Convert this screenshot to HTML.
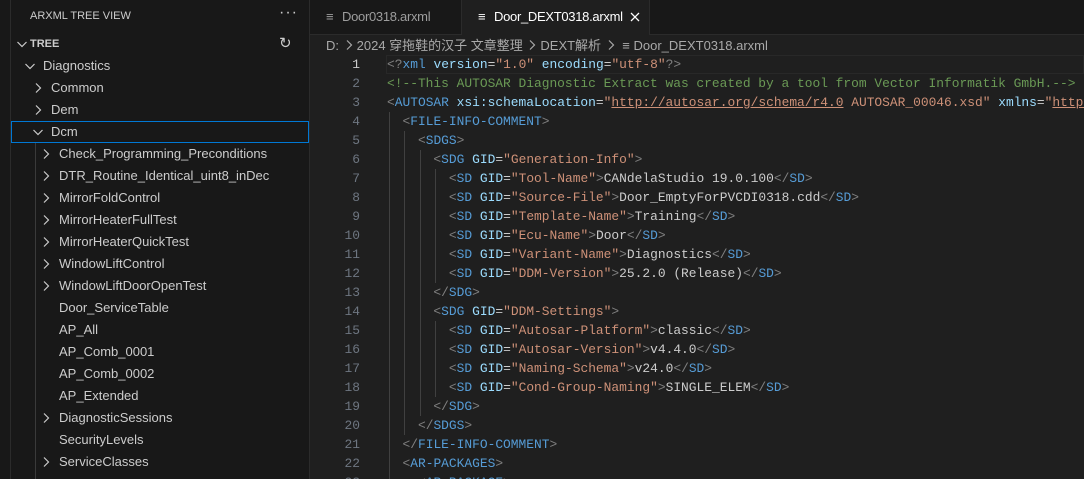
<!DOCTYPE html>
<html><head><meta charset="utf-8"><style>
html,body{margin:0;width:1084px;height:479px;overflow:hidden}
body{background:#1f1f1f;font-family:"Liberation Sans","Noto Sans CJK SC",sans-serif;color:#cccccc;position:relative}
#act{position:absolute;left:0;top:0;width:10px;height:479px;background:#181818;border-right:1px solid #2b2b2b}
#side{position:absolute;left:11px;top:0;width:298px;height:479px;background:#181818;border-right:1px solid #2b2b2b;overflow:hidden}
.hdr{position:absolute;left:19px;top:10px;font-size:11px;color:#cccccc}
.dots{position:absolute;left:268px;top:4px;font-size:16px;letter-spacing:1px}
.row{position:absolute;left:0;width:298px;height:22px;line-height:22px;font-size:13px;white-space:nowrap}
.row svg{position:absolute;top:3px}
.sel{outline:1px solid #0078d4;outline-offset:-1px}
.guide{position:absolute;left:24px;top:143px;width:1px;height:336px;background:#3a3a3a}
#tabs{position:absolute;left:310px;top:0;width:774px;height:34px;background:#181818;border-bottom:1px solid #2b2b2b}
.tab{position:absolute;top:0;height:34px;line-height:34px;font-size:13px;border-right:1px solid #2b2b2b;letter-spacing:-0.3px}
#bc{position:absolute;left:326px;top:35px;font-size:13px;color:#a9a9a9;white-space:nowrap}
#code{position:absolute;left:310px;top:55px;width:774px;height:424px;overflow:hidden;font-family:"Liberation Mono",monospace;font-size:12.9px}
.ln{position:absolute;left:0;width:50px;text-align:right;color:#6e7681;height:19px;line-height:19px}
.cl{position:absolute;left:77px;white-space:pre;height:19px;line-height:19px;color:#cccccc}
.b{color:#808080}.t{color:#569cd6}.a{color:#9cdcfe}.s{color:#ce9178}.m{color:#6a9955}
.ig{position:absolute;width:1px;background:#404040}
</style></head><body>
<svg width="0" height="0" style="position:absolute;top:0;left:0"><defs>
<symbol id="r" viewBox="0 0 16 16"><path d="M6 3.5 L10.5 8 L6 12.5" fill="none" stroke="#cccccc" stroke-width="1.2"/></symbol>
<symbol id="d" viewBox="0 0 16 16"><path d="M3.5 6 L8 10.5 L12.5 6" fill="none" stroke="#cccccc" stroke-width="1.2"/></symbol>
</defs></svg>
<div id="act"></div>
<div id="side">
<div class="hdr">ARXML TREE VIEW</div><div class="dots">···</div>
<div class="row" style="top:33px;font-weight:bold;font-size:11px"><svg width="16" height="16" style="left:3px"><use href="#d"/></svg><span style="position:absolute;left:19px">TREE</span><span style="position:absolute;left:268px;font-size:15px;font-weight:normal">↻</span></div>
<div class="row" style="top:55px"><svg width="16" height="16" style="left:11px"><use href="#d"/></svg><span style="position:absolute;left:32px">Diagnostics</span></div>
<div class="row" style="top:77px"><svg width="16" height="16" style="left:19px"><use href="#r"/></svg><span style="position:absolute;left:40px">Common</span></div>
<div class="row" style="top:99px"><svg width="16" height="16" style="left:19px"><use href="#r"/></svg><span style="position:absolute;left:40px">Dem</span></div>
<div class="row sel" style="top:121px"><svg width="16" height="16" style="left:19px"><use href="#d"/></svg><span style="position:absolute;left:40px">Dcm</span></div>
<div class="guide"></div>
<div class="row" style="top:143px"><svg width="16" height="16" style="left:27px"><use href="#r"/></svg><span style="position:absolute;left:48px">Check_Programming_Preconditions</span></div>
<div class="row" style="top:165px"><svg width="16" height="16" style="left:27px"><use href="#r"/></svg><span style="position:absolute;left:48px">DTR_Routine_Identical_uint8_inDec</span></div>
<div class="row" style="top:187px"><svg width="16" height="16" style="left:27px"><use href="#r"/></svg><span style="position:absolute;left:48px">MirrorFoldControl</span></div>
<div class="row" style="top:209px"><svg width="16" height="16" style="left:27px"><use href="#r"/></svg><span style="position:absolute;left:48px">MirrorHeaterFullTest</span></div>
<div class="row" style="top:231px"><svg width="16" height="16" style="left:27px"><use href="#r"/></svg><span style="position:absolute;left:48px">MirrorHeaterQuickTest</span></div>
<div class="row" style="top:253px"><svg width="16" height="16" style="left:27px"><use href="#r"/></svg><span style="position:absolute;left:48px">WindowLiftControl</span></div>
<div class="row" style="top:275px"><svg width="16" height="16" style="left:27px"><use href="#r"/></svg><span style="position:absolute;left:48px">WindowLiftDoorOpenTest</span></div>
<div class="row" style="top:297px"><span style="position:absolute;left:48px">Door_ServiceTable</span></div>
<div class="row" style="top:319px"><span style="position:absolute;left:48px">AP_All</span></div>
<div class="row" style="top:341px"><span style="position:absolute;left:48px">AP_Comb_0001</span></div>
<div class="row" style="top:363px"><span style="position:absolute;left:48px">AP_Comb_0002</span></div>
<div class="row" style="top:385px"><span style="position:absolute;left:48px">AP_Extended</span></div>
<div class="row" style="top:407px"><svg width="16" height="16" style="left:27px"><use href="#r"/></svg><span style="position:absolute;left:48px">DiagnosticSessions</span></div>
<div class="row" style="top:429px"><span style="position:absolute;left:48px">SecurityLevels</span></div>
<div class="row" style="top:451px"><svg width="16" height="16" style="left:27px"><use href="#r"/></svg><span style="position:absolute;left:48px">ServiceClasses</span></div>
</div>
<div id="tabs">
<div class="tab" style="left:0;width:151px;color:#9d9d9d"><span style="position:absolute;left:16px">≡</span><span style="position:absolute;left:32px">Door0318.arxml</span></div>
<div class="tab" style="left:152px;width:187px;background:#1f1f1f;height:35px;color:#ffffff"><span style="position:absolute;left:16px">≡</span><span style="position:absolute;left:32px">Door_DEXT0318.arxml</span><svg width="12" height="12" style="position:absolute;left:167px;top:11px"><path d="M2 2 L10 10 M10 2 L2 10" stroke="#ffffff" stroke-width="1.3"/></svg></div>
</div>
<div id="bc">D: <svg width="14" height="14" style="vertical-align:-2px"><path d="M4 2.5 L8.5 7 L4 11.5" fill="none" stroke="#a9a9a9" stroke-width="1.2"/></svg>2024 穿拖鞋的汉子 文章整理 <svg width="14" height="14" style="vertical-align:-2px"><path d="M4 2.5 L8.5 7 L4 11.5" fill="none" stroke="#a9a9a9" stroke-width="1.2"/></svg>DEXT解析 <svg width="14" height="14" style="vertical-align:-2px"><path d="M4 2.5 L8.5 7 L4 11.5" fill="none" stroke="#a9a9a9" stroke-width="1.2"/></svg>  ≡ Door_DEXT0318.arxml</div>
<div id="code">
<div style="position:absolute;left:76px;top:0;width:698px;height:19px;border:1px solid #282828;box-sizing:border-box"></div>
<div class="ig" style="left:79px;top:57px;height:367px"></div>
<div class="ig" style="left:94px;top:76px;height:304px"></div>
<div class="ig" style="left:110px;top:95px;height:266px"></div>
<div class="ig" style="left:125px;top:114px;height:114px"></div>
<div class="ig" style="left:125px;top:266px;height:76px"></div>
<div class="ln" style="top:0;color:#cccccc">1</div><div class="cl" style="top:0"><span class="b">&lt;?</span><span class="t">xml</span> <span class="a">version</span>=<span class="s">"1.0"</span> <span class="a">encoding</span>=<span class="s">"utf-8"</span><span class="b">?&gt;</span></div>
<div class="ln" style="top:19px">2</div><div class="cl" style="top:19px"><span class="m">&lt;!--This AUTOSAR Diagnostic Extract was created by a tool from Vector Informatik GmbH.--&gt;</span></div>
<div class="ln" style="top:38px">3</div><div class="cl" style="top:38px"><span class="b">&lt;</span><span class="t">AUTOSAR</span> <span class="a">xsi:schemaLocation</span>=<span class="s">"<u>http://autosar.org/schema/r4.0</u> AUTOSAR_00046.xsd"</span> <span class="a">xmlns</span>=<span class="s">"<u>http://autosar</u></span></div>
<div class="ln" style="top:57px">4</div><div class="cl" style="top:57px">  <span class="b">&lt;</span><span class="t">FILE-INFO-COMMENT</span><span class="b">&gt;</span></div>
<div class="ln" style="top:76px">5</div><div class="cl" style="top:76px">    <span class="b">&lt;</span><span class="t">SDGS</span><span class="b">&gt;</span></div>
<div class="ln" style="top:95px">6</div><div class="cl" style="top:95px">      <span class="b">&lt;</span><span class="t">SDG</span> <span class="a">GID</span>=<span class="s">"Generation-Info"</span><span class="b">&gt;</span></div>
<div class="ln" style="top:114px">7</div><div class="cl" style="top:114px">        <span class="b">&lt;</span><span class="t">SD</span> <span class="a">GID</span>=<span class="s">"Tool-Name"</span><span class="b">&gt;</span>CANdelaStudio 19.0.100<span class="b">&lt;/</span><span class="t">SD</span><span class="b">&gt;</span></div>
<div class="ln" style="top:133px">8</div><div class="cl" style="top:133px">        <span class="b">&lt;</span><span class="t">SD</span> <span class="a">GID</span>=<span class="s">"Source-File"</span><span class="b">&gt;</span>Door_EmptyForPVCDI0318.cdd<span class="b">&lt;/</span><span class="t">SD</span><span class="b">&gt;</span></div>
<div class="ln" style="top:152px">9</div><div class="cl" style="top:152px">        <span class="b">&lt;</span><span class="t">SD</span> <span class="a">GID</span>=<span class="s">"Template-Name"</span><span class="b">&gt;</span>Training<span class="b">&lt;/</span><span class="t">SD</span><span class="b">&gt;</span></div>
<div class="ln" style="top:171px">10</div><div class="cl" style="top:171px">        <span class="b">&lt;</span><span class="t">SD</span> <span class="a">GID</span>=<span class="s">"Ecu-Name"</span><span class="b">&gt;</span>Door<span class="b">&lt;/</span><span class="t">SD</span><span class="b">&gt;</span></div>
<div class="ln" style="top:190px">11</div><div class="cl" style="top:190px">        <span class="b">&lt;</span><span class="t">SD</span> <span class="a">GID</span>=<span class="s">"Variant-Name"</span><span class="b">&gt;</span>Diagnostics<span class="b">&lt;/</span><span class="t">SD</span><span class="b">&gt;</span></div>
<div class="ln" style="top:209px">12</div><div class="cl" style="top:209px">        <span class="b">&lt;</span><span class="t">SD</span> <span class="a">GID</span>=<span class="s">"DDM-Version"</span><span class="b">&gt;</span>25.2.0 (Release)<span class="b">&lt;/</span><span class="t">SD</span><span class="b">&gt;</span></div>
<div class="ln" style="top:228px">13</div><div class="cl" style="top:228px">      <span class="b">&lt;/</span><span class="t">SDG</span><span class="b">&gt;</span></div>
<div class="ln" style="top:247px">14</div><div class="cl" style="top:247px">      <span class="b">&lt;</span><span class="t">SDG</span> <span class="a">GID</span>=<span class="s">"DDM-Settings"</span><span class="b">&gt;</span></div>
<div class="ln" style="top:266px">15</div><div class="cl" style="top:266px">        <span class="b">&lt;</span><span class="t">SD</span> <span class="a">GID</span>=<span class="s">"Autosar-Platform"</span><span class="b">&gt;</span>classic<span class="b">&lt;/</span><span class="t">SD</span><span class="b">&gt;</span></div>
<div class="ln" style="top:285px">16</div><div class="cl" style="top:285px">        <span class="b">&lt;</span><span class="t">SD</span> <span class="a">GID</span>=<span class="s">"Autosar-Version"</span><span class="b">&gt;</span>v4.4.0<span class="b">&lt;/</span><span class="t">SD</span><span class="b">&gt;</span></div>
<div class="ln" style="top:304px">17</div><div class="cl" style="top:304px">        <span class="b">&lt;</span><span class="t">SD</span> <span class="a">GID</span>=<span class="s">"Naming-Schema"</span><span class="b">&gt;</span>v24.0<span class="b">&lt;/</span><span class="t">SD</span><span class="b">&gt;</span></div>
<div class="ln" style="top:323px">18</div><div class="cl" style="top:323px">        <span class="b">&lt;</span><span class="t">SD</span> <span class="a">GID</span>=<span class="s">"Cond-Group-Naming"</span><span class="b">&gt;</span>SINGLE_ELEM<span class="b">&lt;/</span><span class="t">SD</span><span class="b">&gt;</span></div>
<div class="ln" style="top:342px">19</div><div class="cl" style="top:342px">      <span class="b">&lt;/</span><span class="t">SDG</span><span class="b">&gt;</span></div>
<div class="ln" style="top:361px">20</div><div class="cl" style="top:361px">    <span class="b">&lt;/</span><span class="t">SDGS</span><span class="b">&gt;</span></div>
<div class="ln" style="top:380px">21</div><div class="cl" style="top:380px">  <span class="b">&lt;/</span><span class="t">FILE-INFO-COMMENT</span><span class="b">&gt;</span></div>
<div class="ln" style="top:399px">22</div><div class="cl" style="top:399px">  <span class="b">&lt;</span><span class="t">AR-PACKAGES</span><span class="b">&gt;</span></div>
<div class="ln" style="top:418px">23</div><div class="cl" style="top:418px">    <span class="b">&lt;</span><span class="t">AR-PACKAGE</span><span class="b">&gt;</span></div>
</div>
</body></html>
